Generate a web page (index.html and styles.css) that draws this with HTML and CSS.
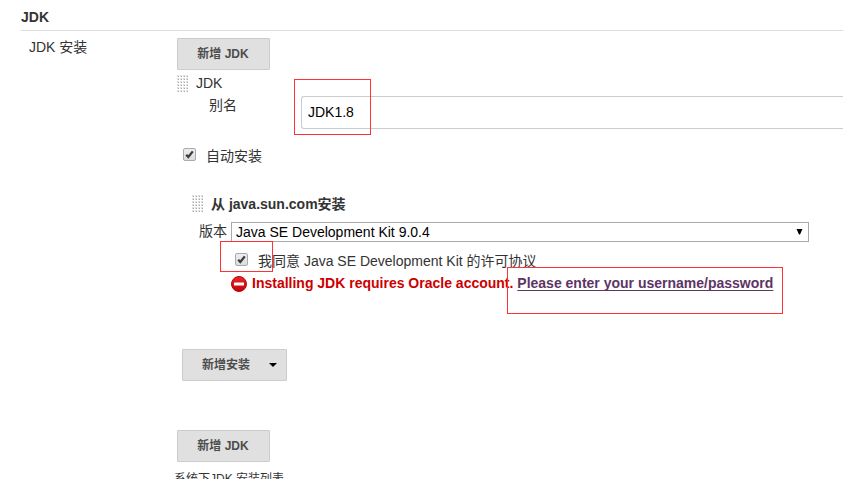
FILE: index.html
```html
<!DOCTYPE html>
<html lang="zh-CN">
<head>
<meta charset="utf-8">
<title>JDK</title>
<link rel="stylesheet" href="styles.css">
</head>
<body>
<svg width="0" height="0" class="defs">
  <defs>
    <pattern id="dots" width="3" height="3" patternUnits="userSpaceOnUse">
      <rect width="2" height="2" fill="#dedede"/><rect x="1" y="1" width="1" height="1" fill="#aaa"/>
    </pattern>
    <linearGradient id="box" x1="0" y1="0" x2="0" y2="1">
      <stop offset="0" stop-color="#eee"/><stop offset="1" stop-color="#dcdcdc"/>
    </linearGradient>
    <linearGradient id="red" x1="0" y1="0" x2="0" y2="1">
      <stop offset="0" stop-color="#e8282c"/><stop offset="1" stop-color="#c40006"/>
    </linearGradient>
    <symbol id="check" viewBox="0 0 13 13">
      <rect x=".5" y=".5" width="12" height="12" rx="1.5" fill="url(#box)" stroke="#aaa"/>
      <path d="M3.2 6.8 5.3 9 9.8 3.4" fill="none" stroke="#3c3c3c" stroke-width="2.3"/>
    </symbol>
  </defs>
</svg>
<main class="config">
  <h2 class="section-title">JDK</h2>
  <div class="section">
    <div class="section-label">JDK 安装</div>
    <div class="section-body">
      <button class="button">新增 JDK</button>
      <div class="row row-jdk"><svg class="handle" width="12" height="18"><rect width="12" height="18" fill="url(#dots)"/></svg><span>JDK</span></div>
      <div class="row-name">
        <label class="name-label">别名</label>
        <input class="name-input" type="text" value="JDK1.8">
      </div>
      <div class="row row-auto"><svg class="check" width="13" height="13"><use href="#check"/></svg><span>自动安装</span></div>
      <div class="installer">
        <div class="row row-source"><svg class="handle" width="12" height="18"><rect width="12" height="18" fill="url(#dots)"/></svg><b>从 java.sun.com安装</b></div>
        <div class="row row-version"><span class="version-label">版本</span>
          <div class="select"><span>Java SE Development Kit 9.0.4</span><svg width="7" height="6"><path d="M.5 0h6L4 5.5H3z"/></svg></div>
        </div>
        <div class="row row-agree"><svg class="check" width="13" height="13"><use href="#check"/></svg><span>我同意 Java SE Development Kit 的许可协议</span></div>
        <div class="row row-error">
          <svg class="error-icon" width="16" height="16" viewBox="0 0 16 16"><circle cx="8" cy="8" r="7.5" fill="url(#red)" stroke="#b5080c"/><rect x="3" y="6.5" width="10" height="3" rx=".6" fill="#fff"/></svg>
          <span>Installing JDK requires Oracle account. <a class="link">Please enter your username/password</a></span>
        </div>
      </div>
      <button class="button button-menu">新增安装<svg width="8" height="4"><path d="M0 0h8L4 4z" fill="#000"/></svg></button>
      <button class="button button-last">新增 JDK</button>
      <div class="description">系统下JDK 安装列表</div>
    </div>
  </div>
</main>
<div class="mark mark-name"></div>
<div class="mark mark-agree"></div>
<div class="mark mark-account"></div>
</body>
</html>
```
FILE: styles.css
```css
* { box-sizing: border-box; }
html, body { height: 479px; overflow: hidden; }
body {
  margin: 0;
  background: #fff;
  color: #333;
  font: 14px/20px "Liberation Sans", "Noto Sans CJK SC", sans-serif;
}
svg { display: block; flex: none; }
.defs { position: absolute; }
.config { padding: 7px 0 0 21px; height: 479px; overflow: hidden; }
.section-title {
  margin: 0;
  height: 24px;
  border-bottom: 1px solid #ddd;
  font-size: 14px;
  line-height: 20px;
}
.section { display: grid; grid-template-columns: 156px 1fr; padding-top: 7px; }
.section-label { padding-left: 8px; line-height: 18px; }
.section-body { min-width: 0; white-space: nowrap; }
.button {
  display: flex;
  align-items: center;
  justify-content: center;
  width: 93px;
  height: 32px;
  padding: 0 1px 0 0;
  border: 1px solid #ccc;
  border-radius: 1px;
  background: #e0e0e0;
  color: #4d4d4d;
  font: bold 12px/18px "Liberation Sans", "Noto Sans CJK SC", sans-serif;
}
.row { display: flex; align-items: center; }
.row-jdk { height: 24px; padding-top: 3px; gap: 7px; }
.row-jdk span { padding-bottom: 2px; }
.row-name { display: flex; height: 35px; padding-left: 32px; }
.name-label { width: 92px; line-height: 22px; }
.name-input {
  flex: 1;
  height: 33px;
  margin-top: 2px;
  padding: 0 6px 2px;
  border: 1px solid #ccc;
  border-right: 0;
  border-radius: 3px 0 0 3px;
  color: #000;
  font: inherit;
}
.row-auto { height: 20px; margin-top: 17px; padding-left: 6px; gap: 10px; }
.row .check { margin-bottom: 3px; }
.installer { margin: 28px 0 0 15px; }
.row-source { height: 20px; gap: 7px; }
.row-version { height: 20px; margin-top: 8px; padding-left: 7px; }
.version-label { width: 32px; line-height: 18px; padding-bottom: 2px; }
.select {
  display: flex;
  align-items: center;
  justify-content: space-between;
  width: 578px;
  height: 20px;
  padding: 0 5px 0 4px;
  border: 1px solid #a9a9a9;
  color: #000;
}
.row-agree { height: 20px; margin-top: 9px; padding-left: 43px; gap: 10px; }
.row-error { height: 22px; margin-top: 1px; padding-left: 39px; gap: 5px; color: #c00; font-weight: bold; }
.error-icon { margin-top: 2px; }
.link {
  color: #5c3566;
  text-decoration: underline;
  text-decoration-thickness: 1px;
  text-underline-offset: 2px;
  text-decoration-skip-ink: none;
}
.button-menu { width: 105px; margin: 55px 0 0 5px; gap: 19px; padding-left: 11px; }
.button-last { margin-top: 49px; }
.description { margin: 7px 0 0 -3px; font-size: 12px; line-height: 20px; }
.mark { position: absolute; border: 1px solid #f33; }
.mark-name { left: 294px; top: 79px; width: 77px; height: 56px; }
.mark-agree { left: 220px; top: 241px; width: 53px; height: 31px; }
.mark-account { left: 507px; top: 267px; width: 276px; height: 47px; }
```
